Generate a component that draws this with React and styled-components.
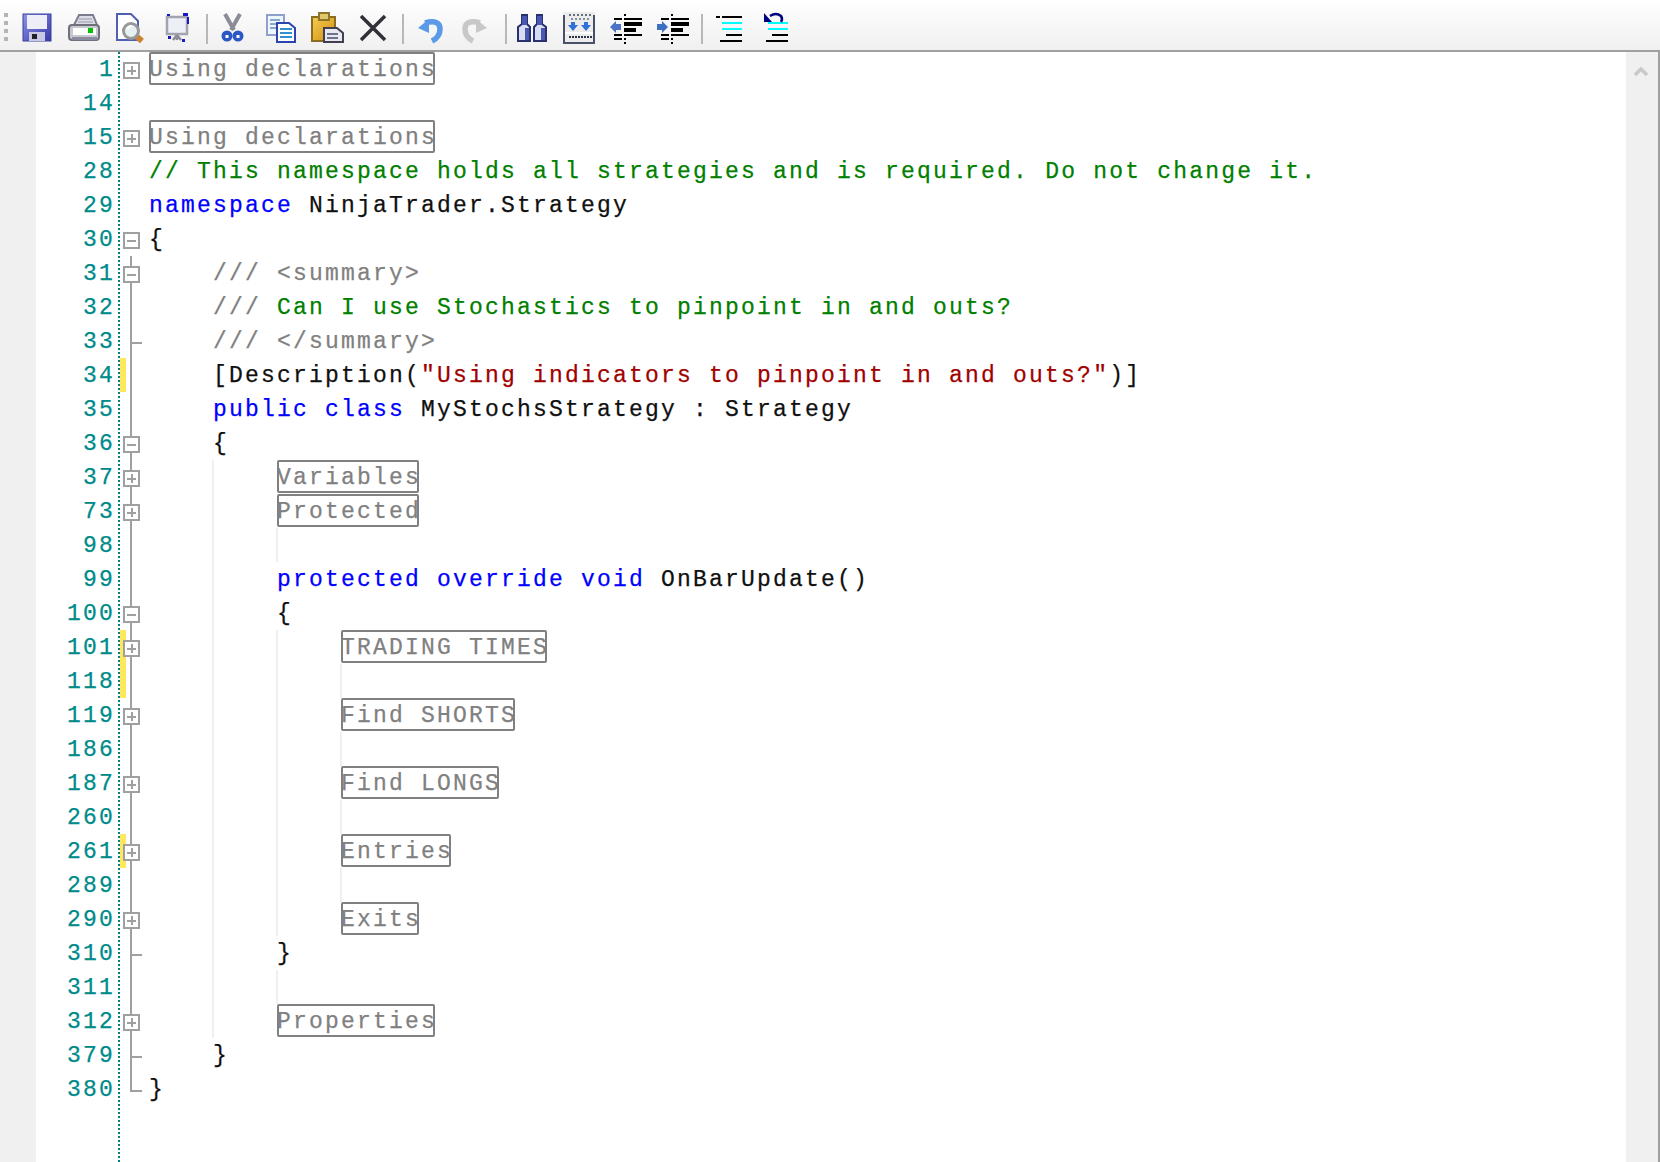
import React from "react";
import styled, { createGlobalStyle } from "styled-components";

const GlobalStyle = createGlobalStyle`
  html, body {
    margin: 0;
    padding: 0;
    background: #fff;
  }
  * {
    box-sizing: border-box;
  }
`;

const Page = styled.div`
  width: 1660px;
  height: 1162px;
  display: flex;
  flex-direction: column;
  overflow: hidden;
  font-family: "Liberation Mono", monospace;
  font-size: 23px;
  letter-spacing: 2.2px;
  -webkit-text-stroke: 0.25px;
`;

const Toolbar = styled.div`
  height: 52px;
  flex: none;
  display: flex;
  align-items: flex-start;
  padding: 11px 0 0 4px;
  background: linear-gradient(#ffffff, #fafafa 30%, #f0f0f0);
  border-bottom: 2px solid #a0a0a0;
`;

const Grip = styled.div`
  width: 4px;
  height: 30px;
  margin: 2px 6px 0 0;
  background: repeating-linear-gradient(#b4b4b4 0 4px, transparent 4px 8px);
`;

const ToolButton = styled.div`
  width: 46.5px;
  height: 32px;
  flex: none;
  display: flex;
  justify-content: center;
  svg {
    overflow: visible;
  }
`;

const ToolSeparator = styled.div`
  width: 10px;
  height: 30px;
  margin-top: 3px;
  flex: none;
  padding-left: 6px;
  &::before {
    content: "";
    display: block;
    width: 2px;
    height: 100%;
    background: #b8b8b8;
  }
`;

const Editor = styled.div`
  flex: 1;
  display: flex;
  min-height: 0;
`;

const LeftMargin = styled.div`
  width: 36px;
  background: #f0f0f0;
`;

const Numbers = styled.div`
  width: 84px;
  padding-right: 3px;
  border-right: 2px dotted #008080;
  color: #008b8b;
  text-align: right;
`;

const NumberRow = styled.div`
  height: 34px;
  line-height: 36px;
`;

const FoldColumn = styled.div`
  width: 29px;
`;

const FoldCell = styled.div`
  position: relative;
  height: 34px;
  padding: 10px 0 0 3px;
  background: ${(p) =>
    p.$marked ? "linear-gradient(#ffe85c, #ffe85c) 0 0 / 6px 100% no-repeat" : "none"};

  &::before {
    content: "";
    display: ${(p) => (p.$line === "none" ? "none" : "block")};
    position: absolute;
    left: 10px;
    top: 0;
    width: 2px;
    height: ${(p) => (p.$line === "end" ? "20px" : "100%")};
    background: #a0a0a0;
  }
  &::after {
    content: "";
    display: ${(p) => (p.$line === "end" || p.$line === "tee" ? "block" : "none")};
    position: absolute;
    left: 10px;
    top: 18px;
    width: 12px;
    height: 2px;
    background: #a0a0a0;
  }
`;

const FoldBox = styled.div`
  position: relative;
  z-index: 1;
  width: 17px;
  height: 17px;
  border: 2px solid #a0a0a0;
  background: #fff;

  &::before {
    content: "";
    position: absolute;
    left: 2px;
    top: 5.5px;
    width: 9px;
    height: 2px;
    background: #a0a0a0;
  }
  &::after {
    content: "";
    display: ${(p) => (p.$open ? "none" : "block")};
    position: absolute;
    left: 5.5px;
    top: 2px;
    width: 2px;
    height: 9px;
    background: #a0a0a0;
  }
`;

const CodeColumn = styled.div`
  flex: 1;
  color: #101010;
`;

const CodeLine = styled.div`
  position: relative;
  height: 34px;
  line-height: 36px;
  white-space: pre;
  padding-left: ${(p) => p.$level * 64}px;
`;

const Guide = styled.span`
  position: absolute;
  top: 0;
  bottom: 0;
  left: ${(p) => p.$level * 64 - 1}px;
  width: 2px;
  background: #f0f0f0;
`;

const Keyword = styled.span`
  color: #0000ff;
`;
const Comment = styled.span`
  color: #008000;
`;
const DocTag = styled.span`
  color: #808080;
`;
const StringText = styled.span`
  color: #a00000;
`;

const Collapsed = styled.span`
  position: relative;
  display: inline-block;
  vertical-align: top;
  height: 33px;
  color: #808080;

  &::after {
    content: "";
    position: absolute;
    inset: 0 2px 0 0;
    border: 2px solid #808080;
    border-radius: 2px;
  }
`;

const Scrollbar = styled.div`
  width: 34px;
  display: flex;
  justify-content: center;
  padding: 13px 2px 0 0;
  background: #f0f0f0;
  border-right: 2px solid #a0a0a0;
`;

const doc = "/// ";

const lines = [
  { n: 1, fold: "plus", line: "none", code: <Collapsed>Using declarations</Collapsed> },
  { n: 14, line: "none" },
  { n: 15, fold: "plus", line: "none", code: <Collapsed>Using declarations</Collapsed> },
  { n: 28, line: "none", code: <Comment>// This namespace holds all strategies and is required. Do not change it.</Comment> },
  { n: 29, line: "none", code: <><Keyword>namespace</Keyword> NinjaTrader.Strategy</> },
  { n: 30, fold: "minus", line: "none", code: "{" },
  { n: 31, fold: "minus", level: 1, code: <DocTag>{doc}&lt;summary&gt;</DocTag> },
  { n: 32, level: 1, code: <><DocTag>{doc}</DocTag><Comment>Can I use Stochastics to pinpoint in and outs?</Comment></> },
  { n: 33, line: "tee", level: 1, code: <DocTag>{doc}&lt;/summary&gt;</DocTag> },
  { n: 34, marked: true, level: 1, code: <>[Description(<StringText>"Using indicators to pinpoint in and outs?"</StringText>)]</> },
  { n: 35, level: 1, code: <><Keyword>public class</Keyword> MyStochsStrategy : Strategy</> },
  { n: 36, fold: "minus", level: 1, code: "{" },
  { n: 37, fold: "plus", level: 2, guides: [1], code: <Collapsed>Variables</Collapsed> },
  { n: 73, fold: "plus", level: 2, guides: [1], code: <Collapsed>Protected</Collapsed> },
  { n: 98, guides: [1, 2] },
  { n: 99, level: 2, guides: [1], code: <><Keyword>protected override void</Keyword> OnBarUpdate()</> },
  { n: 100, fold: "minus", level: 2, guides: [1], code: "{" },
  { n: 101, fold: "plus", marked: true, level: 3, guides: [1, 2], code: <Collapsed>TRADING TIMES</Collapsed> },
  { n: 118, marked: true, guides: [1, 2, 3] },
  { n: 119, fold: "plus", level: 3, guides: [1, 2], code: <Collapsed>Find SHORTS</Collapsed> },
  { n: 186, guides: [1, 2, 3] },
  { n: 187, fold: "plus", level: 3, guides: [1, 2], code: <Collapsed>Find LONGS</Collapsed> },
  { n: 260, guides: [1, 2, 3] },
  { n: 261, fold: "plus", marked: true, level: 3, guides: [1, 2], code: <Collapsed>Entries</Collapsed> },
  { n: 289, guides: [1, 2, 3] },
  { n: 290, fold: "plus", level: 3, guides: [1, 2], code: <Collapsed>Exits</Collapsed> },
  { n: 310, line: "tee", level: 2, guides: [1], code: "}" },
  { n: 311, guides: [1, 2] },
  { n: 312, fold: "plus", level: 2, guides: [1], code: <Collapsed>Properties</Collapsed> },
  { n: 379, line: "tee", level: 1, code: "}" },
  { n: 380, line: "end", code: "}" },
];

const Icon = ({ children }) => (
  <ToolButton>
    <svg width="32" height="32" viewBox="0 0 32 32">{children}</svg>
  </ToolButton>
);

const SaveIcon = () => (
  <Icon>
    <defs>
      <linearGradient id="disk" x1="0" y1="0" x2="1" y2="1">
        <stop offset="0" stopColor="#8c94e8" />
        <stop offset="1" stopColor="#3838a8" />
      </linearGradient>
    </defs>
    <rect x="2" y="3" width="28" height="27" fill="url(#disk)" stroke="#38409c" />
    <rect x="6" y="4" width="20" height="14" fill="#eeeef8" />
    <rect x="8" y="21" width="16" height="9" fill="#c8c8e4" />
    <rect x="11" y="23" width="5" height="5" fill="#202028" />
  </Icon>
);

const PrintIcon = () => (
  <Icon>
    <polygon points="11,4 25,4 29,14 6,14" fill="#dcdce4" stroke="#7c7c90" strokeWidth="2" />
    <path d="M11 8h13M10 11h15" stroke="#9a9aac" />
    <rect x="1" y="14" width="30" height="15" rx="3" fill="#c8c8d0" stroke="#70707c" strokeWidth="2" />
    <rect x="5" y="17" width="23" height="7" fill="#fff" />
    <rect x="20" y="17" width="5" height="5" fill="#00c000" />
    <rect x="4" y="26" width="25" height="3" fill="#8a8aa0" />
  </Icon>
);

const PreviewIcon = () => (
  <Icon>
    <path d="M3 3h14l7 7v19H3z" fill="#fff" stroke="#5060b0" strokeWidth="2" />
    <path d="M22 25l6 5" stroke="#c88430" strokeWidth="6" />
    <circle cx="17" cy="20" r="7.5" fill="#e6f0f0" stroke="#989898" strokeWidth="3" />
    <path d="M13 18q2-3 5-3" stroke="#fff" strokeWidth="2" fill="none" />
  </Icon>
);

const StampIcon = () => (
  <Icon>
    <rect x="6" y="6" width="20" height="17" fill="#ecf0f6" stroke="#a4a4b0" strokeWidth="2.5" />
    <path d="M6 3h3v2H6zM22 2h5v3h-5zM26 6h2v7h-2z" fill="#1818c8" />
    <path d="M16 24l-4 5M16 24l4 5M16 24v5" stroke="#8c8c98" strokeWidth="2.5" />
    <path d="M7 25h3v3H7zM21 28h3v3h-3z" fill="#1818c8" />
  </Icon>
);

const CutIcon = () => (
  <Icon>
    <path d="M8 3l9 16M23 3l-9 16" stroke="#8c8c98" strokeWidth="4" />
    <circle cx="10" cy="25" r="5.5" fill="#2c58c4" />
    <circle cx="21" cy="25" r="5.5" fill="#2c58c4" />
    <rect x="8.5" y="24" width="3" height="3" fill="#fff" />
    <rect x="19.5" y="24" width="3" height="3" fill="#fff" />
  </Icon>
);

const CopyIcon = () => (
  <Icon>
    <rect x="3" y="4" width="17" height="20" fill="#f0f6ff" stroke="#8ea0cc" strokeWidth="2" />
    <path d="M6 9h10M6 13h8M6 17h6" stroke="#88a8d0" strokeWidth="2" />
    <path d="M13 12h12l6 5v14H13z" fill="#fff" stroke="#2c44b0" strokeWidth="2" />
    <path d="M16 18h12M16 22h12M16 26h12" stroke="#3090d0" strokeWidth="2" />
  </Icon>
);

const PasteIcon = () => (
  <Icon>
    <defs>
      <linearGradient id="board" x1="0" y1="0" x2="1" y2="1">
        <stop offset="0" stopColor="#f4cc50" />
        <stop offset="1" stopColor="#d09010" />
      </linearGradient>
    </defs>
    <rect x="2" y="6" width="23" height="24" fill="url(#board)" stroke="#8c6c20" strokeWidth="2" />
    <rect x="9" y="2" width="10" height="7" fill="#e0c868" stroke="#8c7428" strokeWidth="2" />
    <path d="M14 17h13l6 5v9H14z" fill="#e8e8f2" stroke="#404050" strokeWidth="2" />
    <path d="M17 23h11M17 27h11" stroke="#707088" strokeWidth="2" />
  </Icon>
);

const DeleteIcon = () => (
  <Icon>
    <path d="M4 5l24 24M28 5L4 29" stroke="#303038" strokeWidth="3.5" />
  </Icon>
);

const UndoIcon = ({ flip, color = "#5a9ae8" }) => (
  <Icon>
    <g transform={flip ? "matrix(-1 0 0 1 32 0)" : undefined}>
      <path d="M12 12Q27 8 27 18 27 26 19 30" fill="none" stroke={color} strokeWidth="5.5" />
      <polygon points="5,17 16,8 16,22" fill={color} />
    </g>
  </Icon>
);

const FindIcon = () => (
  <Icon>
    <path d="M6 4h5v9l3 3v14H2V16l4-3z" fill="#d8dcf2" stroke="#283070" strokeWidth="2" />
    <path d="M21 4h5v9l4 3v14H18V16l3-3z" fill="#d8dcf2" stroke="#283070" strokeWidth="2" />
    <path d="M6 5h5v9H6zM21 5h5v9h-5zM9 17h4v12H9zM25 17h4v12h-4z" fill="#4858b0" />
  </Icon>
);

const BookmarkIcon = () => {
  const dots = [];
  for (let x = 6; x < 28; x += 4) dots.push(<rect key={x} x={x} y="3" width="2" height="2" fill="#60707c" />);
  for (let x = 8; x < 28; x += 4) dots.push(<rect key={"b" + x} x={x} y="7" width="2" height="2" fill="#80909c" />);
  for (let x = 6; x < 28; x += 3) dots.push(<rect key={"c" + x} x={x} y="25" width="2" height="2" fill="#303848" />);
  return (
    <Icon>
      <rect x="0" y="1" width="32" height="32" fill="#ececec" />
      <path d="M1 4v28h30V4" fill="none" stroke="#485068" strokeWidth="2" />
      {dots}
      <path d="M5 14h3v-3h4v3h3l-5 6zM18 14h3v-3h4v3h3l-5 6z" fill="#3070d8" />
      <rect x="2" y="21" width="28" height="2" fill="#fff" />
    </Icon>
  );
};

const TextLines = () => (
  <path d="M15 3h2v2h-2zM5 7h8v2H5zM15 7h18v2H15zM15 11h18v4H15zM15 17h12v4H15zM5 23h8v2H5zM15 23h18v2H15zM5 27h8v2H5zM15 27h2v2h-2zM15 31h2v2h-2z" fill="#000" />
);

const OutdentIcon = () => (
  <Icon>
    <TextLines />
    <polygon points="1,16 7,10 7,13 12,13 12,19 7,19 7,22" fill="#4a70c8" />
  </Icon>
);

const IndentIcon = () => (
  <Icon>
    <TextLines />
    <polygon points="1,13 6,13 6,10 12,16 6,22 6,19 1,19" fill="#3a70c0" />
  </Icon>
);

const ListIcon = () => (
  <Icon>
    <path d="M4 5h4v2H4zM10 5h20v2H10zM14 23h16v2H14zM8 29h22v2H8z" fill="#000" />
    <path d="M10 11h20v2H10zM10 17h20v2H10z" fill="#00ffff" />
  </Icon>
);

const ListUndoIcon = () => (
  <Icon>
    <path d="M13 23h16v2H13zM7 29h22v2H7z" fill="#000" />
    <path d="M9 11h20v2H9zM9 17h20v2H9z" fill="#00ffff" />
    <polygon points="5,2 5,11 13,11" fill="#000080" />
    <path d="M11 5q6-4 11 0 2 3 0 6" fill="none" stroke="#000080" strokeWidth="2.5" />
  </Icon>
);

export default function App() {
  return (
    <Page>
      <GlobalStyle />
      <Toolbar>
        <Grip />
        <SaveIcon />
        <PrintIcon />
        <PreviewIcon />
        <StampIcon />
        <ToolSeparator />
        <CutIcon />
        <CopyIcon />
        <PasteIcon />
        <DeleteIcon />
        <ToolSeparator />
        <UndoIcon />
        <UndoIcon flip color="#c8c8c8" />
        <ToolSeparator />
        <FindIcon />
        <BookmarkIcon />
        <OutdentIcon />
        <IndentIcon />
        <ToolSeparator />
        <ListIcon />
        <ListUndoIcon />
      </Toolbar>
      <Editor>
        <LeftMargin />
        <Numbers>
          {lines.map((l) => (
            <NumberRow key={l.n}>{l.n}</NumberRow>
          ))}
        </Numbers>
        <FoldColumn>
          {lines.map((l) => (
            <FoldCell key={l.n} $line={l.line || "full"} $marked={l.marked}>
              {l.fold && <FoldBox $open={l.fold === "minus"} />}
            </FoldCell>
          ))}
        </FoldColumn>
        <CodeColumn>
          {lines.map((l) => (
            <CodeLine key={l.n} $level={l.level || 0}>
              {(l.guides || []).map((g) => (
                <Guide key={g} $level={g} />
              ))}
              {l.code}
            </CodeLine>
          ))}
        </CodeColumn>
        <Scrollbar>
          <svg width="16" height="12" viewBox="0 0 16 12">
            <path d="M2 10l6-6 6 6" fill="none" stroke="#c8c8c8" strokeWidth="3.5" />
          </svg>
        </Scrollbar>
      </Editor>
    </Page>
  );
}
